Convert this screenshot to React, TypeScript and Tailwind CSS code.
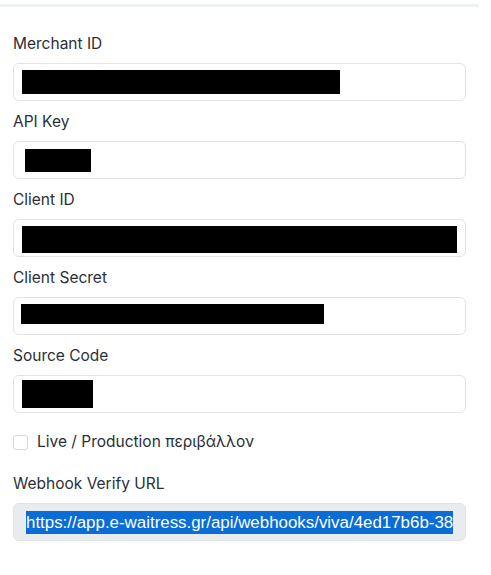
import React from "react";

const fields = [
  { label: "Merchant ID", barLeft: 8, barWidth: 318, barTop: 6, barHeight: 24 },
  { label: "API Key", barLeft: 11, barWidth: 66, barTop: 7, barHeight: 23 },
  { label: "Client ID", barLeft: 8, barWidth: 435, barTop: 6, barHeight: 27 },
  { label: "Client Secret", barLeft: 7, barWidth: 303, barTop: 6, barHeight: 20 },
  { label: "Source Code", barLeft: 8, barWidth: 71, barTop: 4, barHeight: 28 },
];

function Field({ label, barLeft, barWidth, barTop, barHeight }) {
  return (
    <div className="mb-[11px]">
      <div className="h-5 text-[15.5px] leading-5 text-[#2b2f36]">{label}</div>
      <div className="relative mt-[9px] h-[38px] w-[453px] rounded-md border border-[#e1e3e8] bg-white">
        {/* redacted value */}
        <div
          className="absolute bg-black"
          style={{ left: barLeft, top: barTop, width: barWidth, height: barHeight }}
        />
      </div>
    </div>
  );
}

export default function App() {
  return (
    <div
      className="min-h-screen bg-white"
      style={{ fontFamily: "Inter, 'Noto Sans', sans-serif" }}
    >
      <div className="pt-1">
        <div className="h-[3px] w-[479px] bg-[#eef1f6]" />
      </div>
      <div className="pl-[13px] pt-[27px]">
        {fields.map((f) => (
          <Field key={f.label} {...f} />
        ))}

        <div className="mt-[19px] flex h-5 items-center gap-[9px]">
          <div className="h-[15px] w-[15px] rounded-[3px] border border-[#d6d8dd] bg-white" />
          <span className="text-[15.5px] leading-5 text-[#2b2f36]">
            Live / Production περιβάλλον
          </span>
        </div>

        <div className="mt-[22px] h-5 text-[15.5px] leading-5 text-[#2b2f36]">
          Webhook Verify URL
        </div>
        <div className="mt-[9px] flex h-[38px] w-[453px] items-center overflow-hidden rounded-md border border-[#dfe2e6] bg-[#e9ecef] pl-[12px] pr-[13px]">
          <span
            className="whitespace-nowrap bg-[#0a6cd6] text-[16.9px] leading-[23px] text-white"
            style={{ fontFamily: "'Liberation Sans', Arial, sans-serif" }}
          >
            https://app.e-waitress.gr/api/webhooks/viva/4ed17b6b-38
          </span>
        </div>
      </div>
    </div>
  );
}
